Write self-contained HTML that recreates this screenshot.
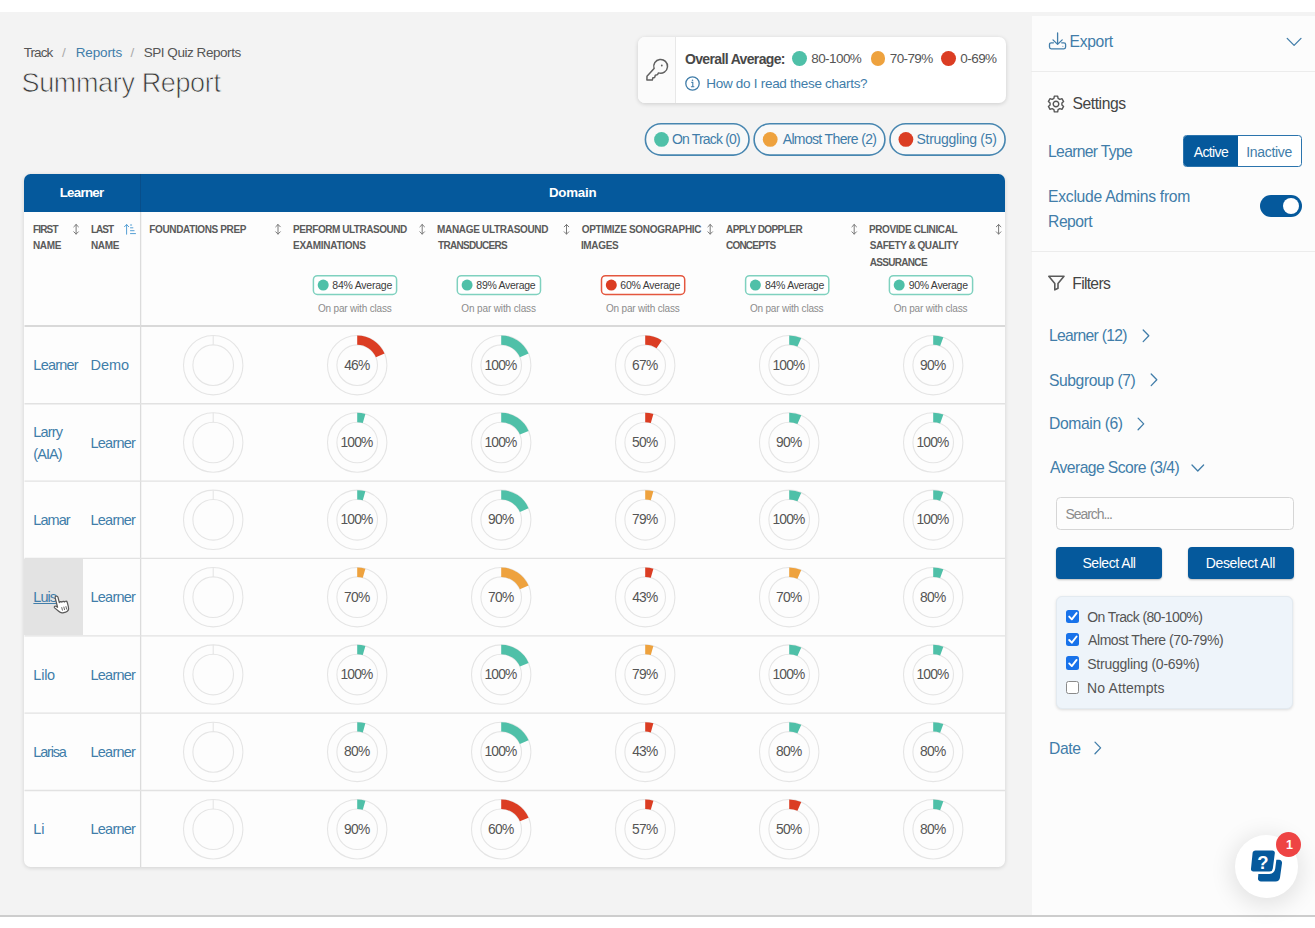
<!DOCTYPE html>
<html><head><meta charset="utf-8"><title>Summary Report</title>
<style>
*{box-sizing:border-box;margin:0;padding:0}
html,body{width:1315px;height:928px;overflow:hidden;background:#fff}
body{font-family:"Liberation Sans",sans-serif;color:#4a4a4a;position:relative}
.abs{position:absolute}
#main{position:absolute;left:0;top:12px;width:1315px;height:904px;background:#f3f3f3}
#side{position:absolute;left:1031.500px;top:16px;width:284px;height:900px;background:#fcfcfc}
#botline{position:absolute;left:0;top:915px;width:1315px;height:2px;background:#cdcdcd}
.t{position:absolute;white-space:nowrap;line-height:1}
#legend{position:absolute;left:637.5px;top:37px;width:368px;height:66px;background:#fff;border-radius:7px;box-shadow:0 1px 4px rgba(0,0,0,.16);overflow:hidden}
#legend .key{position:absolute;left:0;top:0;width:38px;height:66px;background:#fbfbfb;border-right:1px solid #e8e8e8}
.dot{position:absolute;border-radius:50%}
.g{background:#4fc0a8}.o{background:#eea23e}.r{background:#db3d23}
.pill{position:absolute;top:123px;height:33px;border:1.700px solid #4584ae;border-radius:17px;background:#f8f8f8}
.pill .dot{top:8px;width:14.6px;height:14.6px}
#table{position:absolute;left:24px;top:173.5px;width:981px;height:693px;background:#fdfdfd;border-radius:6.500px;box-shadow:0 1px 4px rgba(0,0,0,.14);overflow:hidden}
#thead{position:absolute;left:0;top:0;width:981px;height:38.6px;background:#05599c}
.vline{position:absolute;left:140px;top:212px;width:1px;height:655px;background:#dadada}
.hline{position:absolute;left:24px;width:981px;height:1.3px;background:#e1e1e1}
.hov{position:absolute;left:24px;top:559px;width:58.500px;height:76px;background:#e3e3e3}
.avg{position:absolute;top:275px;height:20.2px;border:1.4px solid #7fd1bf;border-radius:4.5px;background:#fff;width:84.6px}
.avg.red{border-color:#e2543c}
.avg .dot{left:4.4px;top:3.2px;width:11px;height:11px}
.charts{position:absolute;left:0;top:0;pointer-events:none}
.ring{fill:none;stroke:#e5e5e5;stroke-width:1.1}
.sl{position:absolute;left:1031px;width:284px;height:1px;background:#ececec}
.btn{position:absolute;top:546.5px;height:32.2px;background:#05599c;border-radius:4px;box-shadow:0 1px 2px rgba(0,0,0,.25)}
.cb{position:absolute;left:1066px;width:13.4px;height:13.4px;border-radius:2.5px}
.cb.on{background:#1872ea}
.cb.off{background:#fff;border:1.2px solid #8a8a8a}
</style></head><body>
<div id="main"></div><div id="side"></div><div id="botline"></div>

<!-- legend -->
<div id="legend"><div class="key"></div>
  <svg class="abs" style="left:0;top:0" width="38" height="66" viewBox="637.500 37 38 66" fill="none" stroke="#606060" stroke-width="1.500" stroke-linecap="round" stroke-linejoin="round"><path d="M653.600 68.600L646.500 76.200L646.400 80L651.800 80.100L652.400 77.800L654.200 77.400L654.800 75.200L657 74.600L658 72.900A6.900 6.900 0 1 0 653.600 68.600Z"/><circle cx="661.300" cy="65.500" r="0.900" fill="#606060" stroke="none"/></svg>
  <div class="dot g" style="left:154.800px;top:14.300px;width:14.800px;height:14.800px"></div>
  <div class="dot o" style="left:233px;top:14.300px;width:14.800px;height:14.800px"></div>
  <div class="dot r" style="left:303.800px;top:14.300px;width:14.800px;height:14.800px"></div>
  <svg class="abs" style="left:47.200px;top:39.200px" width="15" height="15" viewBox="0 0 15 15" fill="none" stroke="#417da9" stroke-width="1.300"><circle cx="7.500" cy="7.500" r="6.700"/><path d="M6.300 6.400h1.500v4.200M5.900 10.800h3.400" stroke-width="1.100"/><circle cx="7.500" cy="4.200" r="0.800" fill="#417da9" stroke="none"/></svg>
</div>

<!-- pills -->
<svg class="charts" width="1315" height="928" viewBox="0 0 1315 928">
<g fill="#f8f8f8" stroke="#4786b0" stroke-width="1.600">
<rect x="645.400" y="123.700" width="103.600" height="31.400" rx="15.700"/>
<rect x="754.100" y="123.700" width="130.800" height="31.400" rx="15.700"/>
<rect x="890" y="123.700" width="115.100" height="31.400" rx="15.700"/>
</g>
<circle cx="661.500" cy="139.400" r="7.400" fill="#4fc0a8"/><circle cx="770.200" cy="139.400" r="7.400" fill="#eea23e"/><circle cx="905.900" cy="139.400" r="7.400" fill="#db3d23"/>
</svg>
<!-- table -->
<div id="table">
  <div id="thead"><div class="abs" style="left:116px;top:0;width:1px;height:39px;background:#084e8a"></div></div>
</div>
<div class="hov"></div>
<svg class="charts" width="1315" height="928" viewBox="0 0 1315 928"><line x1="24.500" x2="1005" y1="326" y2="326" stroke="#d9d9d9" stroke-width="2"/><line x1="140.600" x2="140.600" y1="212" y2="867" stroke="#dcdcdc" stroke-width="1.300"/></svg>

<svg class="charts" width="1315" height="928" viewBox="0 0 1315 928">
<defs><g id="sa" fill="none" stroke="#7a7a7a" stroke-width="1" stroke-linecap="round" stroke-linejoin="round"><path d="M0 -4.800v9.600M-2.300 -2.500L0 -4.800l2.300 2.300M-2.300 2.500L0 4.800l2.300-2.300"/></g></defs>
<use href="#sa" x="76.100" y="229.300"/>
<use href="#sa" x="278" y="229.300"/><use href="#sa" x="422.200" y="229.300"/><use href="#sa" x="566.500" y="229.300"/><use href="#sa" x="710.200" y="229.300"/><use href="#sa" x="854.200" y="229.300"/><use href="#sa" x="998.600" y="229.300"/>
<g fill="none" stroke="#559fd4" stroke-width="1" stroke-linecap="round" stroke-linejoin="round"><path d="M126.600 224.600v9.600M124.500 226.700l2.100-2.100l2.100 2.100M130.500 225h1.200M130.500 227.800h2.400M130.500 230.700h3.600M130.500 233.600h5"/></g>
</svg>

<svg class="charts" width="1315" height="928" viewBox="0 0 1315 928">
<rect x="313.4" y="275.700" width="83.200" height="18.800" rx="4" fill="#fff" stroke="#7fd1bf" stroke-width="1.500"/><circle cx="323.2" cy="285.100" r="5.500" fill="#4fc0a8"/>
<rect x="457.3" y="275.700" width="83.200" height="18.800" rx="4" fill="#fff" stroke="#7fd1bf" stroke-width="1.500"/><circle cx="467.1" cy="285.100" r="5.500" fill="#4fc0a8"/>
<rect x="601.5" y="275.700" width="83.200" height="18.800" rx="4" fill="#fff" stroke="#e4573f" stroke-width="1.500"/><circle cx="611.3" cy="285.100" r="5.500" fill="#db3d23"/>
<rect x="745.6" y="275.700" width="83.200" height="18.800" rx="4" fill="#fff" stroke="#7fd1bf" stroke-width="1.500"/><circle cx="755.4" cy="285.100" r="5.500" fill="#4fc0a8"/>
<rect x="889.4" y="275.700" width="83.200" height="18.800" rx="4" fill="#fff" stroke="#7fd1bf" stroke-width="1.500"/><circle cx="899.2" cy="285.100" r="5.500" fill="#4fc0a8"/>
</svg>


<svg class="charts" width="1315" height="928" viewBox="0 0 1315 928"><circle cx="213.20" cy="365.15" r="29.7" class="ring"/><circle cx="213.20" cy="365.15" r="20.3" class="ring"/>
<line x1="213.20" y1="335.45" x2="213.20" y2="344.85" class="ring"/>
<circle cx="357.20" cy="365.15" r="29.7" class="ring"/><circle cx="357.20" cy="365.15" r="20.3" class="ring"/>
<path d="M357.20 335.45 A29.7 29.7 0 0 1 384.54 353.55 L375.89 357.22 A20.3 20.3 0 0 0 357.20 344.85 Z" fill="#db3d23"/>
<circle cx="501.20" cy="365.15" r="29.7" class="ring"/><circle cx="501.20" cy="365.15" r="20.3" class="ring"/>
<path d="M501.20 335.45 A29.7 29.7 0 0 1 528.54 353.55 L519.89 357.22 A20.3 20.3 0 0 0 501.20 344.85 Z" fill="#4fc0a8"/>
<circle cx="645.20" cy="365.15" r="29.7" class="ring"/><circle cx="645.20" cy="365.15" r="20.3" class="ring"/>
<path d="M645.20 335.45 A29.7 29.7 0 0 1 661.81 340.53 L656.55 348.32 A20.3 20.3 0 0 0 645.20 344.85 Z" fill="#db3d23"/>
<circle cx="789.20" cy="365.15" r="29.7" class="ring"/><circle cx="789.20" cy="365.15" r="20.3" class="ring"/>
<path d="M789.20 335.45 A29.7 29.7 0 0 1 801.28 338.02 L797.46 346.61 A20.3 20.3 0 0 0 789.20 344.85 Z" fill="#4fc0a8"/>
<circle cx="933.20" cy="365.15" r="29.7" class="ring"/><circle cx="933.20" cy="365.15" r="20.3" class="ring"/>
<path d="M933.20 335.45 A29.7 29.7 0 0 1 943.36 337.24 L940.14 346.07 A20.3 20.3 0 0 0 933.20 344.85 Z" fill="#4fc0a8"/>
<line x1="24.5" x2="1005" y1="403.75" y2="403.75" stroke="#e2e2e2" stroke-width="1.3"/>
<circle cx="213.20" cy="442.50" r="29.7" class="ring"/><circle cx="213.20" cy="442.50" r="20.3" class="ring"/>
<line x1="213.20" y1="412.80" x2="213.20" y2="422.20" class="ring"/>
<circle cx="357.20" cy="442.50" r="29.7" class="ring"/><circle cx="357.20" cy="442.50" r="20.3" class="ring"/>
<path d="M357.20 412.80 A29.7 29.7 0 0 1 365.39 413.95 L362.80 422.99 A20.3 20.3 0 0 0 357.20 422.20 Z" fill="#4fc0a8"/>
<circle cx="501.20" cy="442.50" r="29.7" class="ring"/><circle cx="501.20" cy="442.50" r="20.3" class="ring"/>
<path d="M501.20 412.80 A29.7 29.7 0 0 1 528.54 430.90 L519.89 434.57 A20.3 20.3 0 0 0 501.20 422.20 Z" fill="#4fc0a8"/>
<circle cx="645.20" cy="442.50" r="29.7" class="ring"/><circle cx="645.20" cy="442.50" r="20.3" class="ring"/>
<path d="M645.20 412.80 A29.7 29.7 0 0 1 653.39 413.95 L650.80 422.99 A20.3 20.3 0 0 0 645.20 422.20 Z" fill="#db3d23"/>
<circle cx="789.20" cy="442.50" r="29.7" class="ring"/><circle cx="789.20" cy="442.50" r="20.3" class="ring"/>
<path d="M789.20 412.80 A29.7 29.7 0 0 1 801.28 415.37 L797.46 423.96 A20.3 20.3 0 0 0 789.20 422.20 Z" fill="#4fc0a8"/>
<circle cx="933.20" cy="442.50" r="29.7" class="ring"/><circle cx="933.20" cy="442.50" r="20.3" class="ring"/>
<path d="M933.20 412.80 A29.7 29.7 0 0 1 943.36 414.59 L940.14 423.42 A20.3 20.3 0 0 0 933.20 422.20 Z" fill="#4fc0a8"/>
<line x1="24.5" x2="1005" y1="481.10" y2="481.10" stroke="#e2e2e2" stroke-width="1.3"/>
<circle cx="213.20" cy="519.85" r="29.7" class="ring"/><circle cx="213.20" cy="519.85" r="20.3" class="ring"/>
<line x1="213.20" y1="490.15" x2="213.20" y2="499.55" class="ring"/>
<circle cx="357.20" cy="519.85" r="29.7" class="ring"/><circle cx="357.20" cy="519.85" r="20.3" class="ring"/>
<path d="M357.20 490.15 A29.7 29.7 0 0 1 365.39 491.30 L362.80 500.34 A20.3 20.3 0 0 0 357.20 499.55 Z" fill="#4fc0a8"/>
<circle cx="501.20" cy="519.85" r="29.7" class="ring"/><circle cx="501.20" cy="519.85" r="20.3" class="ring"/>
<path d="M501.20 490.15 A29.7 29.7 0 0 1 528.54 508.25 L519.89 511.92 A20.3 20.3 0 0 0 501.20 499.55 Z" fill="#4fc0a8"/>
<circle cx="645.20" cy="519.85" r="29.7" class="ring"/><circle cx="645.20" cy="519.85" r="20.3" class="ring"/>
<path d="M645.20 490.15 A29.7 29.7 0 0 1 653.39 491.30 L650.80 500.34 A20.3 20.3 0 0 0 645.20 499.55 Z" fill="#eea23e"/>
<circle cx="789.20" cy="519.85" r="29.7" class="ring"/><circle cx="789.20" cy="519.85" r="20.3" class="ring"/>
<path d="M789.20 490.15 A29.7 29.7 0 0 1 801.28 492.72 L797.46 501.31 A20.3 20.3 0 0 0 789.20 499.55 Z" fill="#4fc0a8"/>
<circle cx="933.20" cy="519.85" r="29.7" class="ring"/><circle cx="933.20" cy="519.85" r="20.3" class="ring"/>
<path d="M933.20 490.15 A29.7 29.7 0 0 1 943.36 491.94 L940.14 500.77 A20.3 20.3 0 0 0 933.20 499.55 Z" fill="#4fc0a8"/>
<line x1="24.5" x2="1005" y1="558.45" y2="558.45" stroke="#e2e2e2" stroke-width="1.3"/>
<circle cx="213.20" cy="597.20" r="29.7" class="ring"/><circle cx="213.20" cy="597.20" r="20.3" class="ring"/>
<line x1="213.20" y1="567.50" x2="213.20" y2="576.90" class="ring"/>
<circle cx="357.20" cy="597.20" r="29.7" class="ring"/><circle cx="357.20" cy="597.20" r="20.3" class="ring"/>
<path d="M357.20 567.50 A29.7 29.7 0 0 1 365.39 568.65 L362.80 577.69 A20.3 20.3 0 0 0 357.20 576.90 Z" fill="#eea23e"/>
<circle cx="501.20" cy="597.20" r="29.7" class="ring"/><circle cx="501.20" cy="597.20" r="20.3" class="ring"/>
<path d="M501.20 567.50 A29.7 29.7 0 0 1 528.54 585.60 L519.89 589.27 A20.3 20.3 0 0 0 501.20 576.90 Z" fill="#eea23e"/>
<circle cx="645.20" cy="597.20" r="29.7" class="ring"/><circle cx="645.20" cy="597.20" r="20.3" class="ring"/>
<path d="M645.20 567.50 A29.7 29.7 0 0 1 653.39 568.65 L650.80 577.69 A20.3 20.3 0 0 0 645.20 576.90 Z" fill="#db3d23"/>
<circle cx="789.20" cy="597.20" r="29.7" class="ring"/><circle cx="789.20" cy="597.20" r="20.3" class="ring"/>
<path d="M789.20 567.50 A29.7 29.7 0 0 1 801.28 570.07 L797.46 578.66 A20.3 20.3 0 0 0 789.20 576.90 Z" fill="#eea23e"/>
<circle cx="933.20" cy="597.20" r="29.7" class="ring"/><circle cx="933.20" cy="597.20" r="20.3" class="ring"/>
<path d="M933.20 567.50 A29.7 29.7 0 0 1 943.36 569.29 L940.14 578.12 A20.3 20.3 0 0 0 933.20 576.90 Z" fill="#4fc0a8"/>
<line x1="24.5" x2="1005" y1="635.80" y2="635.80" stroke="#e2e2e2" stroke-width="1.3"/>
<circle cx="213.20" cy="674.55" r="29.7" class="ring"/><circle cx="213.20" cy="674.55" r="20.3" class="ring"/>
<line x1="213.20" y1="644.85" x2="213.20" y2="654.25" class="ring"/>
<circle cx="357.20" cy="674.55" r="29.7" class="ring"/><circle cx="357.20" cy="674.55" r="20.3" class="ring"/>
<path d="M357.20 644.85 A29.7 29.7 0 0 1 365.39 646.00 L362.80 655.04 A20.3 20.3 0 0 0 357.20 654.25 Z" fill="#4fc0a8"/>
<circle cx="501.20" cy="674.55" r="29.7" class="ring"/><circle cx="501.20" cy="674.55" r="20.3" class="ring"/>
<path d="M501.20 644.85 A29.7 29.7 0 0 1 528.54 662.95 L519.89 666.62 A20.3 20.3 0 0 0 501.20 654.25 Z" fill="#4fc0a8"/>
<circle cx="645.20" cy="674.55" r="29.7" class="ring"/><circle cx="645.20" cy="674.55" r="20.3" class="ring"/>
<path d="M645.20 644.85 A29.7 29.7 0 0 1 653.39 646.00 L650.80 655.04 A20.3 20.3 0 0 0 645.20 654.25 Z" fill="#eea23e"/>
<circle cx="789.20" cy="674.55" r="29.7" class="ring"/><circle cx="789.20" cy="674.55" r="20.3" class="ring"/>
<path d="M789.20 644.85 A29.7 29.7 0 0 1 801.28 647.42 L797.46 656.01 A20.3 20.3 0 0 0 789.20 654.25 Z" fill="#4fc0a8"/>
<circle cx="933.20" cy="674.55" r="29.7" class="ring"/><circle cx="933.20" cy="674.55" r="20.3" class="ring"/>
<path d="M933.20 644.85 A29.7 29.7 0 0 1 943.36 646.64 L940.14 655.47 A20.3 20.3 0 0 0 933.20 654.25 Z" fill="#4fc0a8"/>
<line x1="24.5" x2="1005" y1="713.15" y2="713.15" stroke="#e2e2e2" stroke-width="1.3"/>
<circle cx="213.20" cy="751.90" r="29.7" class="ring"/><circle cx="213.20" cy="751.90" r="20.3" class="ring"/>
<line x1="213.20" y1="722.20" x2="213.20" y2="731.60" class="ring"/>
<circle cx="357.20" cy="751.90" r="29.7" class="ring"/><circle cx="357.20" cy="751.90" r="20.3" class="ring"/>
<path d="M357.20 722.20 A29.7 29.7 0 0 1 365.39 723.35 L362.80 732.39 A20.3 20.3 0 0 0 357.20 731.60 Z" fill="#4fc0a8"/>
<circle cx="501.20" cy="751.90" r="29.7" class="ring"/><circle cx="501.20" cy="751.90" r="20.3" class="ring"/>
<path d="M501.20 722.20 A29.7 29.7 0 0 1 528.54 740.30 L519.89 743.97 A20.3 20.3 0 0 0 501.20 731.60 Z" fill="#4fc0a8"/>
<circle cx="645.20" cy="751.90" r="29.7" class="ring"/><circle cx="645.20" cy="751.90" r="20.3" class="ring"/>
<path d="M645.20 722.20 A29.7 29.7 0 0 1 653.39 723.35 L650.80 732.39 A20.3 20.3 0 0 0 645.20 731.60 Z" fill="#db3d23"/>
<circle cx="789.20" cy="751.90" r="29.7" class="ring"/><circle cx="789.20" cy="751.90" r="20.3" class="ring"/>
<path d="M789.20 722.20 A29.7 29.7 0 0 1 801.28 724.77 L797.46 733.36 A20.3 20.3 0 0 0 789.20 731.60 Z" fill="#4fc0a8"/>
<circle cx="933.20" cy="751.90" r="29.7" class="ring"/><circle cx="933.20" cy="751.90" r="20.3" class="ring"/>
<path d="M933.20 722.20 A29.7 29.7 0 0 1 943.36 723.99 L940.14 732.82 A20.3 20.3 0 0 0 933.20 731.60 Z" fill="#4fc0a8"/>
<line x1="24.5" x2="1005" y1="790.50" y2="790.50" stroke="#e2e2e2" stroke-width="1.3"/>
<circle cx="213.20" cy="829.25" r="29.7" class="ring"/><circle cx="213.20" cy="829.25" r="20.3" class="ring"/>
<line x1="213.20" y1="799.55" x2="213.20" y2="808.95" class="ring"/>
<circle cx="357.20" cy="829.25" r="29.7" class="ring"/><circle cx="357.20" cy="829.25" r="20.3" class="ring"/>
<path d="M357.20 799.55 A29.7 29.7 0 0 1 365.39 800.70 L362.80 809.74 A20.3 20.3 0 0 0 357.20 808.95 Z" fill="#4fc0a8"/>
<circle cx="501.20" cy="829.25" r="29.7" class="ring"/><circle cx="501.20" cy="829.25" r="20.3" class="ring"/>
<path d="M501.20 799.55 A29.7 29.7 0 0 1 528.54 817.65 L519.89 821.32 A20.3 20.3 0 0 0 501.20 808.95 Z" fill="#db3d23"/>
<circle cx="645.20" cy="829.25" r="29.7" class="ring"/><circle cx="645.20" cy="829.25" r="20.3" class="ring"/>
<path d="M645.20 799.55 A29.7 29.7 0 0 1 653.39 800.70 L650.80 809.74 A20.3 20.3 0 0 0 645.20 808.95 Z" fill="#db3d23"/>
<circle cx="789.20" cy="829.25" r="29.7" class="ring"/><circle cx="789.20" cy="829.25" r="20.3" class="ring"/>
<path d="M789.20 799.55 A29.7 29.7 0 0 1 801.28 802.12 L797.46 810.71 A20.3 20.3 0 0 0 789.20 808.95 Z" fill="#db3d23"/>
<circle cx="933.20" cy="829.25" r="29.7" class="ring"/><circle cx="933.20" cy="829.25" r="20.3" class="ring"/>
<path d="M933.20 799.55 A29.7 29.7 0 0 1 943.36 801.34 L940.14 810.17 A20.3 20.3 0 0 0 933.20 808.95 Z" fill="#4fc0a8"/></svg>

<!-- sidebar shapes -->
<div class="sl" style="top:71px"></div>
<div class="sl" style="top:250.600px"></div>
<svg class="abs" style="left:1047px;top:31px" width="20" height="20" viewBox="0 0 20 20" fill="none" stroke="#417da9" stroke-width="1.300" stroke-linecap="round" stroke-linejoin="round"><path d="M10.600 1.900v11.300M6 8.900l4.600 4.500 4.600-4.500"/><path d="M6.400 11.800H4.200c-1 0-1.700.800-1.700 1.700v2.600c0 1 .8 1.700 1.700 1.700h12.700c1 0 1.700-.800 1.700-1.700v-2.600c0-1-.8-1.700-1.700-1.700h-2.200"/><circle cx="15.900" cy="15.200" r="0.500" fill="#417da9" stroke="none"/></svg>
<svg class="abs" style="left:1286px;top:37px" width="16" height="10" viewBox="0 0 16 10" fill="none" stroke="#417da9" stroke-width="1.300" stroke-linecap="round" stroke-linejoin="round"><path d="M1.200 1.400l6.900 7 6.900-7"/></svg>

<svg class="abs" style="left:1046.400px;top:93.600px" width="20" height="20" viewBox="-10 -10 20 20" fill="none" stroke="#555" stroke-width="1.400" stroke-linejoin="round"><path d="M-2.09 -5.62 L-1.66 -7.83 L1.66 -7.83 L2.09 -5.62 L3.82 -4.62 L5.95 -5.35 L7.61 -2.47 L5.92 -1.00 L5.92 1.00 L7.61 2.47 L5.95 5.35 L3.82 4.62 L2.09 5.62 L1.66 7.83 L-1.66 7.83 L-2.09 5.62 L-3.82 4.62 L-5.95 5.35 L-7.61 2.47 L-5.92 1.00 L-5.92 -1.00 L-7.61 -2.47 L-5.95 -5.35 L-3.82 -4.62Z"/><circle cx="0" cy="0" r="2.800"/></svg>

<div class="abs" style="left:1183.400px;top:134.600px;width:118.800px;height:32.600px;border:1.400px solid #2b74ad;border-radius:3.500px;background:#fff;overflow:hidden">
  <div class="abs" style="left:0;top:0;width:54px;height:32px;background:#05599c"></div>
</div>
<div class="abs" style="left:1260.100px;top:194.800px;width:42.100px;height:21.800px;border-radius:11px;background:#05599c"><div class="abs" style="left:23.200px;top:2.800px;width:16.200px;height:16.200px;border-radius:50%;background:#fff"></div></div>

<svg class="abs" style="left:1047.200px;top:274px" width="19" height="18" viewBox="0 0 19 18" fill="none" stroke="#5a5a5a" stroke-width="1.600" stroke-linejoin="round"><path d="M1.800 2.300h15.200L11 9.400V14.200L7.800 15.900V9.400z"/></svg>

<svg class="charts" width="1315" height="928" viewBox="0 0 1315 928" fill="none" stroke="#417da9" stroke-width="1.300" stroke-linecap="round" stroke-linejoin="round">
<path d="M1143.200 330l5.600 5.800-5.600 5.800"/><path d="M1151.200 374l5.600 5.800-5.600 5.800"/><path d="M1138.100 418.100l5.600 5.800-5.600 5.800"/><path d="M1192 465l5.800 6 5.800-6"/><path d="M1095 742.100l5.600 5.800-5.600 5.800"/>
</svg>

<div class="abs" style="left:1056.300px;top:497.400px;width:237.400px;height:32.300px;border:1.200px solid #d6d6d6;border-radius:4.500px;background:#fdfdfd"></div>
<div class="btn" style="left:1056.300px;width:106px"></div>
<div class="btn" style="left:1187.700px;width:106px"></div>
<div class="abs" style="left:1056.300px;top:595.600px;width:237px;height:113px;border:1px solid #e3eaf0;border-radius:6px;background:#eef4fa;box-shadow:0 1px 3px rgba(0,0,0,.13)"></div>
<div class="cb on" style="top:609.500px"></div>
<div class="cb on" style="top:632.900px"></div>
<div class="cb on" style="top:656.300px"></div>
<div class="cb off" style="top:680.500px"></div>
<svg class="charts" width="1315" height="928" viewBox="0 0 1315 928" fill="none" stroke="#fff" stroke-width="1.900" stroke-linecap="round" stroke-linejoin="round">
<path d="M1069.200 616.600l2.600 2.700 4.800-6.200"/><path d="M1069.200 640l2.600 2.700 4.800-6.200"/><path d="M1069.200 663.400l2.600 2.700 4.800-6.200"/>
</svg>

<!-- help bubble -->
<div class="abs" style="left:1235.200px;top:835.200px;width:62.600px;height:62.600px;border-radius:50%;background:#fff;box-shadow:0 4px 22px 4px rgba(0,0,0,.10)"></div>
<svg class="abs" style="left:1246px;top:846px" width="40" height="40" viewBox="0 0 40 40"><path d="M13.500 13.800 L33 13.800 a3 3 0 0 1 3 3.400 L34 31.600 a4.600 4.600 0 0 1 -4.600 4 L15 35.600 a3 3 0 0 1 -3 -3.400 z" fill="#05599c"/><path d="M9.600 3.200 L26.400 3.200 a3.600 3.600 0 0 1 3.600 4.100 L28 22.600 a4.800 4.800 0 0 1 -4.800 4.200 L7.400 26.800 a3.600 3.600 0 0 1 -3.600 -4.100 L5.400 7 a4.200 4.200 0 0 1 4.200 -3.800 z" fill="#05599c" stroke="#fff" stroke-width="2.400"/></svg>
<div class="abs" style="left:1275.900px;top:831.700px;width:25px;height:25px;border-radius:50%;background:#ee4444"></div>

<div class="t" style="left:23.64px;top:46.07px;font-size:13.5px;color:#555;letter-spacing:-0.875px;">Track</div>
<div class="t" style="left:62.08px;top:46.07px;font-size:13.5px;color:#aaa;">/</div>
<div class="t" style="left:75.72px;top:46.07px;font-size:13.5px;color:#417da9;letter-spacing:-0.130px;">Reports</div>
<div class="t" style="left:130.56px;top:46.07px;font-size:13.5px;color:#aaa;">/</div>
<div class="t" style="left:143.64px;top:46.07px;font-size:13.5px;color:#555;letter-spacing:-0.448px;">SPI Quiz Reports</div>
<div class="t" style="left:21.56px;top:69.64px;font-size:27px;color:#383838;letter-spacing:-0.363px;-webkit-text-stroke:0.75px #f3f3f3;">Summary Report</div>
<div class="t" style="left:685.00px;top:51.95px;font-size:14px;color:#484848;font-weight:700;letter-spacing:-0.651px;">Overall Average:</div>
<div class="t" style="left:811.28px;top:52.37px;font-size:13.5px;color:#555;letter-spacing:-0.580px;">80-100%</div>
<div class="t" style="left:889.72px;top:52.37px;font-size:13.5px;color:#555;letter-spacing:-0.596px;">70-79%</div>
<div class="t" style="left:960.36px;top:52.37px;font-size:13.5px;color:#555;letter-spacing:-0.570px;">0-69%</div>
<div class="t" style="left:706.28px;top:77.07px;font-size:13.5px;color:#417da9;letter-spacing:-0.288px;">How do I read these charts?</div>
<div class="t" style="left:671.92px;top:132.35px;font-size:14px;color:#417da9;letter-spacing:-0.816px;">On Track (0)</div>
<div class="t" style="left:782.72px;top:132.35px;font-size:14px;color:#417da9;letter-spacing:-0.649px;">Almost There (2)</div>
<div class="t" style="left:916.56px;top:132.35px;font-size:14px;color:#417da9;letter-spacing:-0.286px;">Struggling (5)</div>
<div class="t" style="left:59.72px;top:186.44px;font-size:13.3px;color:#fff;font-weight:700;letter-spacing:-0.717px;">Learner</div>
<div class="t" style="left:548.92px;top:186.44px;font-size:13.3px;color:#fff;font-weight:700;letter-spacing:-0.196px;">Domain</div>
<div class="t" style="left:32.92px;top:224.73px;font-size:10px;color:#5a5a5a;font-weight:700;letter-spacing:-0.800px;">FIRST</div>
<div class="t" style="left:32.92px;top:240.73px;font-size:10px;color:#5a5a5a;font-weight:700;letter-spacing:-0.333px;">NAME</div>
<div class="t" style="left:91.00px;top:224.73px;font-size:10px;color:#5a5a5a;font-weight:700;letter-spacing:-1.007px;">LAST</div>
<div class="t" style="left:91.00px;top:240.73px;font-size:10px;color:#5a5a5a;font-weight:700;letter-spacing:-0.347px;">NAME</div>
<div class="t" style="left:149.36px;top:224.73px;font-size:10px;color:#5a5a5a;font-weight:700;letter-spacing:-0.367px;">FOUNDATIONS PREP</div>
<div class="t" style="left:293.08px;top:224.73px;font-size:10px;color:#5a5a5a;font-weight:700;letter-spacing:-0.458px;">PERFORM ULTRASOUND</div>
<div class="t" style="left:293.08px;top:240.73px;font-size:10px;color:#5a5a5a;font-weight:700;letter-spacing:-0.276px;">EXAMINATIONS</div>
<div class="t" style="left:437.00px;top:224.73px;font-size:10px;color:#5a5a5a;font-weight:700;letter-spacing:-0.311px;">MANAGE ULTRASOUND</div>
<div class="t" style="left:438.00px;top:240.73px;font-size:10px;color:#5a5a5a;font-weight:700;letter-spacing:-0.700px;">TRANSDUCERS</div>
<div class="t" style="left:581.72px;top:224.73px;font-size:10px;color:#5a5a5a;font-weight:700;letter-spacing:-0.303px;">OPTIMIZE SONOGRAPHIC</div>
<div class="t" style="left:580.92px;top:240.73px;font-size:10px;color:#5a5a5a;font-weight:700;letter-spacing:-0.344px;">IMAGES</div>
<div class="t" style="left:726.00px;top:224.73px;font-size:10px;color:#5a5a5a;font-weight:700;letter-spacing:-0.563px;">APPLY DOPPLER</div>
<div class="t" style="left:726.00px;top:240.73px;font-size:10px;color:#5a5a5a;font-weight:700;letter-spacing:-0.783px;">CONCEPTS</div>
<div class="t" style="left:868.92px;top:224.73px;font-size:10px;color:#5a5a5a;font-weight:700;letter-spacing:-0.381px;">PROVIDE CLINICAL</div>
<div class="t" style="left:869.72px;top:240.73px;font-size:10px;color:#5a5a5a;font-weight:700;letter-spacing:-0.467px;">SAFETY &amp; QUALITY</div>
<div class="t" style="left:869.72px;top:257.64px;font-size:10px;color:#5a5a5a;font-weight:700;letter-spacing:-0.688px;">ASSURANCE</div>
<div class="t" style="left:332.28px;top:280.11px;font-size:10.5px;color:#3c3c3c;letter-spacing:-0.222px;">84% Average</div>
<div class="t" style="left:318.00px;top:303.54px;font-size:10px;color:#8c8c8c;letter-spacing:-0.186px;">On par with class</div>
<div class="t" style="left:476.36px;top:280.11px;font-size:10.5px;color:#3c3c3c;letter-spacing:-0.302px;">89% Average</div>
<div class="t" style="left:461.28px;top:303.54px;font-size:10px;color:#8c8c8c;letter-spacing:-0.124px;">On par with class</div>
<div class="t" style="left:620.28px;top:280.11px;font-size:10.5px;color:#3c3c3c;letter-spacing:-0.222px;">60% Average</div>
<div class="t" style="left:606.00px;top:303.54px;font-size:10px;color:#8c8c8c;letter-spacing:-0.186px;">On par with class</div>
<div class="t" style="left:765.00px;top:280.11px;font-size:10.5px;color:#3c3c3c;letter-spacing:-0.302px;">84% Average</div>
<div class="t" style="left:749.92px;top:303.54px;font-size:10px;color:#8c8c8c;letter-spacing:-0.186px;">On par with class</div>
<div class="t" style="left:908.72px;top:280.11px;font-size:10.5px;color:#3c3c3c;letter-spacing:-0.302px;">90% Average</div>
<div class="t" style="left:893.64px;top:303.54px;font-size:10px;color:#8c8c8c;letter-spacing:-0.174px;">On par with class</div>
<div class="t" style="left:33.36px;top:358.18px;font-size:14.5px;color:#417da9;letter-spacing:-0.797px;">Learner</div>
<div class="t" style="left:90.56px;top:358.18px;font-size:14.5px;color:#417da9;letter-spacing:-0.067px;">Demo</div>
<div class="t" style="left:344.28px;top:358.57px;font-size:13.8px;color:#555;letter-spacing:-0.860px;">46%</div>
<div class="t" style="left:484.54px;top:358.57px;font-size:13.8px;color:#555;letter-spacing:-0.847px;">100%</div>
<div class="t" style="left:632.08px;top:358.57px;font-size:13.8px;color:#555;letter-spacing:-0.760px;">67%</div>
<div class="t" style="left:772.54px;top:358.57px;font-size:13.8px;color:#555;letter-spacing:-0.847px;">100%</div>
<div class="t" style="left:920.08px;top:358.57px;font-size:13.8px;color:#555;letter-spacing:-0.760px;">90%</div>
<div class="t" style="left:33.36px;top:424.53px;font-size:14.5px;color:#417da9;letter-spacing:-0.820px;">Larry</div>
<div class="t" style="left:33.36px;top:447.23px;font-size:14.5px;color:#417da9;letter-spacing:-0.940px;">(AIA)</div>
<div class="t" style="left:90.56px;top:435.53px;font-size:14.5px;color:#417da9;letter-spacing:-0.783px;">Learner</div>
<div class="t" style="left:340.54px;top:435.92px;font-size:13.8px;color:#555;letter-spacing:-0.847px;">100%</div>
<div class="t" style="left:484.54px;top:435.92px;font-size:13.8px;color:#555;letter-spacing:-0.847px;">100%</div>
<div class="t" style="left:632.08px;top:435.92px;font-size:13.8px;color:#555;letter-spacing:-0.760px;">50%</div>
<div class="t" style="left:776.08px;top:435.92px;font-size:13.8px;color:#555;letter-spacing:-0.760px;">90%</div>
<div class="t" style="left:916.54px;top:435.92px;font-size:13.8px;color:#555;letter-spacing:-0.847px;">100%</div>
<div class="t" style="left:33.36px;top:512.88px;font-size:14.5px;color:#417da9;letter-spacing:-0.950px;">Lamar</div>
<div class="t" style="left:90.56px;top:512.88px;font-size:14.5px;color:#417da9;letter-spacing:-0.783px;">Learner</div>
<div class="t" style="left:340.54px;top:513.27px;font-size:13.8px;color:#555;letter-spacing:-0.847px;">100%</div>
<div class="t" style="left:488.08px;top:513.27px;font-size:13.8px;color:#555;letter-spacing:-0.760px;">90%</div>
<div class="t" style="left:632.08px;top:513.27px;font-size:13.8px;color:#555;letter-spacing:-0.760px;">79%</div>
<div class="t" style="left:772.54px;top:513.27px;font-size:13.8px;color:#555;letter-spacing:-0.847px;">100%</div>
<div class="t" style="left:916.54px;top:513.27px;font-size:13.8px;color:#555;letter-spacing:-0.847px;">100%</div>
<div class="t" style="left:33.36px;top:590.23px;font-size:14.5px;color:#417da9;letter-spacing:-1.000px;text-decoration:underline;">Luis</div>
<div class="t" style="left:90.56px;top:590.23px;font-size:14.5px;color:#417da9;letter-spacing:-0.783px;">Learner</div>
<div class="t" style="left:344.08px;top:590.62px;font-size:13.8px;color:#555;letter-spacing:-0.760px;">70%</div>
<div class="t" style="left:488.08px;top:590.62px;font-size:13.8px;color:#555;letter-spacing:-0.760px;">70%</div>
<div class="t" style="left:632.28px;top:590.62px;font-size:13.8px;color:#555;letter-spacing:-0.860px;">43%</div>
<div class="t" style="left:776.08px;top:590.62px;font-size:13.8px;color:#555;letter-spacing:-0.760px;">70%</div>
<div class="t" style="left:920.08px;top:590.62px;font-size:13.8px;color:#555;letter-spacing:-0.760px;">80%</div>
<div class="t" style="left:33.36px;top:667.58px;font-size:14.5px;color:#417da9;letter-spacing:-0.260px;">Lilo</div>
<div class="t" style="left:90.56px;top:667.58px;font-size:14.5px;color:#417da9;letter-spacing:-0.783px;">Learner</div>
<div class="t" style="left:340.54px;top:667.97px;font-size:13.8px;color:#555;letter-spacing:-0.847px;">100%</div>
<div class="t" style="left:484.54px;top:667.97px;font-size:13.8px;color:#555;letter-spacing:-0.847px;">100%</div>
<div class="t" style="left:632.08px;top:667.97px;font-size:13.8px;color:#555;letter-spacing:-0.760px;">79%</div>
<div class="t" style="left:772.54px;top:667.97px;font-size:13.8px;color:#555;letter-spacing:-0.847px;">100%</div>
<div class="t" style="left:916.54px;top:667.97px;font-size:13.8px;color:#555;letter-spacing:-0.847px;">100%</div>
<div class="t" style="left:33.36px;top:744.93px;font-size:14.5px;color:#417da9;letter-spacing:-1.204px;">Larisa</div>
<div class="t" style="left:90.56px;top:744.93px;font-size:14.5px;color:#417da9;letter-spacing:-0.783px;">Learner</div>
<div class="t" style="left:344.08px;top:745.32px;font-size:13.8px;color:#555;letter-spacing:-0.760px;">80%</div>
<div class="t" style="left:484.54px;top:745.32px;font-size:13.8px;color:#555;letter-spacing:-0.847px;">100%</div>
<div class="t" style="left:632.28px;top:745.32px;font-size:13.8px;color:#555;letter-spacing:-0.860px;">43%</div>
<div class="t" style="left:776.08px;top:745.32px;font-size:13.8px;color:#555;letter-spacing:-0.760px;">80%</div>
<div class="t" style="left:920.08px;top:745.32px;font-size:13.8px;color:#555;letter-spacing:-0.760px;">80%</div>
<div class="t" style="left:33.36px;top:822.28px;font-size:14.5px;color:#417da9;letter-spacing:-0.220px;">Li</div>
<div class="t" style="left:90.56px;top:822.28px;font-size:14.5px;color:#417da9;letter-spacing:-0.783px;">Learner</div>
<div class="t" style="left:344.08px;top:822.67px;font-size:13.8px;color:#555;letter-spacing:-0.760px;">90%</div>
<div class="t" style="left:488.08px;top:822.67px;font-size:13.8px;color:#555;letter-spacing:-0.760px;">60%</div>
<div class="t" style="left:632.08px;top:822.67px;font-size:13.8px;color:#555;letter-spacing:-0.760px;">57%</div>
<div class="t" style="left:776.08px;top:822.67px;font-size:13.8px;color:#555;letter-spacing:-0.760px;">50%</div>
<div class="t" style="left:920.08px;top:822.67px;font-size:13.8px;color:#555;letter-spacing:-0.760px;">80%</div>
<div class="t" style="left:1069.56px;top:33.71px;font-size:15.7px;color:#417da9;letter-spacing:-0.344px;">Export</div>
<div class="t" style="left:1072.44px;top:95.71px;font-size:15.7px;color:#444;letter-spacing:-0.440px;">Settings</div>
<div class="t" style="left:1048.08px;top:143.91px;font-size:15.7px;color:#417da9;letter-spacing:-0.682px;">Learner Type</div>
<div class="t" style="left:1193.72px;top:144.65px;font-size:14px;color:#fff;letter-spacing:-0.608px;">Active</div>
<div class="t" style="left:1246.28px;top:144.65px;font-size:14px;color:#417da9;letter-spacing:-0.323px;">Inactive</div>
<div class="t" style="left:1048.08px;top:188.91px;font-size:15.7px;color:#417da9;letter-spacing:-0.280px;">Exclude Admins from</div>
<div class="t" style="left:1048.08px;top:214.01px;font-size:15.7px;color:#417da9;letter-spacing:-0.508px;">Report</div>
<div class="t" style="left:1072.28px;top:275.71px;font-size:15.7px;color:#444;letter-spacing:-0.703px;">Filters</div>
<div class="t" style="left:1049.00px;top:328.01px;font-size:15.7px;color:#417da9;letter-spacing:-0.707px;">Learner (12)</div>
<div class="t" style="left:1049.00px;top:372.51px;font-size:15.7px;color:#417da9;letter-spacing:-0.436px;">Subgroup (7)</div>
<div class="t" style="left:1049.00px;top:416.11px;font-size:15.7px;color:#417da9;letter-spacing:-0.391px;">Domain (6)</div>
<div class="t" style="left:1050.00px;top:460.01px;font-size:15.7px;color:#417da9;letter-spacing:-0.582px;">Average Score (3/4)</div>
<div class="t" style="left:1049.00px;top:740.61px;font-size:15.7px;color:#417da9;letter-spacing:-0.420px;">Date</div>
<div class="t" style="left:1065.44px;top:507.15px;font-size:14px;color:#8c8c8c;letter-spacing:-1.070px;">Search...</div>
<div class="t" style="left:1082.44px;top:556.15px;font-size:14px;color:#fff;letter-spacing:-0.449px;">Select All</div>
<div class="t" style="left:1205.64px;top:556.15px;font-size:14px;color:#fff;letter-spacing:-0.316px;">Deselect All</div>
<div class="t" style="left:1087.28px;top:609.95px;font-size:14px;color:#555;letter-spacing:-0.619px;">On Track (80-100%)</div>
<div class="t" style="left:1088.08px;top:633.45px;font-size:14px;color:#555;letter-spacing:-0.450px;">Almost There (70-79%)</div>
<div class="t" style="left:1087.28px;top:656.85px;font-size:14px;color:#555;letter-spacing:-0.249px;">Struggling (0-69%)</div>
<div class="t" style="left:1087.08px;top:680.65px;font-size:14px;color:#555;letter-spacing:0.122px;">No Attempts</div>
<div class="t" style="left:1257.28px;top:853.54px;font-size:18.5px;color:#fff;font-weight:700;">?</div>
<div class="t" style="left:1286.00px;top:838.52px;font-size:12.5px;color:#fff;font-weight:700;">1</div>
<!-- cursor -->
<svg class="abs" style="left:46.700px;top:589px" width="28" height="28" viewBox="0 0 28 28"><g transform="translate(5.600 5.200) rotate(-14 8 10) scale(1.080)"><path d="M4 2.300a1.300 1.300 0 0 1 2.600 0V7.600c0-.900 2.500-.900 2.500.200c0-.900 2.400-.800 2.400.400c0-.800 2.300-.600 2.300.600V13c0 2.500-1.200 4.500-3.500 4.500H7.500c-1.500 0-2.600-1-3.400-2.300L1.200 11.200c-.600-.900.700-2 1.600-1.100L4 11.300z" fill="#fff" stroke="#5a5a5a" stroke-width="1.150" stroke-linejoin="round"/><path d="M7.700 12.200v3.200M9.700 12.200v3.200M11.700 12.200v3.200" stroke="#5a5a5a" stroke-width="0.800" fill="none"/></g></svg>

</body></html>
